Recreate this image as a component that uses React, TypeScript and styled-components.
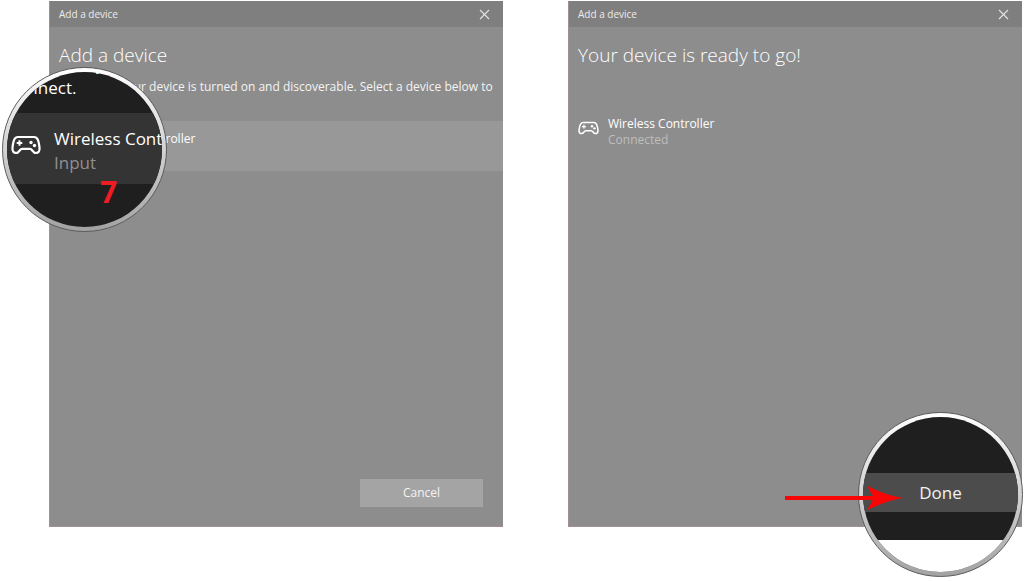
import React from "react";
import styled, { createGlobalStyle } from "styled-components";

const GlobalStyle = createGlobalStyle`
  *, *::before, *::after { box-sizing: border-box; }
  body {
    margin: 0;
    background: #ffffff;
    color: #ffffff;
    font-family: "Open Sans", "Noto Sans", sans-serif;
    font-size: 12px;
    line-height: 16px;
  }
  button { font: inherit; color: inherit; border: 0; padding: 0; }
  h1, p { margin: 0; }
`;

const Page = styled.main`
  display: grid;
  grid-template-columns: 1fr 1fr;
  gap: 65px;
  min-height: 100vh;
  padding: 1px 2px 54px 49px;
  overflow: hidden;
`;

const Dialog = styled.section`
  position: relative;
  display: flex;
  flex-direction: column;
  background: #8d8d8d;
  border: solid #a38f93;
  border-width: 0 0 1px 1px;
`;

const TitleBar = styled.header`
  display: flex;
  align-items: center;
  justify-content: space-between;
  height: 26px;
  padding: 0 13px 0 9px;
  background: #7f7f7f;
  color: #ececec;
  font-size: 10px;
`;

const CloseButton = styled.button`
  display: flex;
  background: transparent;
`;

const Heading = styled.h1`
  padding: 14px 9px 0;
  font-size: 19px;
  font-weight: 350;
  line-height: 28px;
`;

const Hint = styled.p`
  padding: 10px 8px 0 9px;
  color: #f4f4f4;
`;

const DeviceRow = styled.button<{ $selected?: boolean }>`
  display: flex;
  align-items: flex-start;
  gap: 9px;
  width: 100%;
  min-height: 50px;
  margin-top: ${(p) => (p.$selected ? 10 : 37)}px;
  padding: 10px 9px 8px;
  text-align: left;
  background: ${(p) => (p.$selected ? "#989898" : "transparent")};

  svg { margin-top: 5px; }
`;

const DeviceText = styled.span<{ $large?: boolean }>`
  display: flex;
  flex-direction: column;
  white-space: nowrap;
  font-size: ${(p) => (p.$large ? 17 : 12)}px;
  line-height: ${(p) => (p.$large ? 24 : 16)}px;
`;

const Status = styled.span<{ $tone: string }>`
  color: ${(p) => p.$tone};
`;

const Footer = styled.footer`
  display: flex;
  justify-content: flex-end;
  margin-top: auto;
  padding: 0 20px 19px;
`;

const CancelButton = styled.button`
  width: 123px;
  height: 28px;
  background: #a4a4a4;
  color: #f4f4f4;
`;

const Lens = styled.div<{ $place: "left" | "right" }>`
  position: absolute;
  z-index: 1;
  ${(p) => (p.$place === "left" ? "left: -48px; top: 66px;" : "right: -1px; bottom: -51px;")}
  width: 165px;
  height: 165px;
  padding: 4px;
  border: 1px solid #5c5c5c;
  border-radius: 50%;
  background: linear-gradient(#ffffff, #d2d2d2 50%, #a2a2a2);
`;

const LensGlass = styled.div`
  display: flex;
  flex-direction: column;
  height: 100%;
  overflow: hidden;
  border-radius: 50%;
  background: #1f1f1f;
`;

const LensHint = styled.div`
  display: flex;
  flex: none;
  flex-direction: column;
  justify-content: flex-end;
  height: 41px;
  padding: 0 0 13px 2px;
  white-space: nowrap;
  font-size: 17px;
  line-height: 24px;
`;

const LensRow = styled.div`
  display: flex;
  align-items: flex-start;
  gap: 13px;
  flex: none;
  height: 71px;
  padding: 14px 0 0 4px;
  background: #343434;

  svg { flex: none; margin-top: 8px; }
`;

const StepNumber = styled.strong`
  position: absolute;
  left: 97px;
  top: 109px;
  color: #ee1c23;
  font-size: 30px;
  line-height: 30px;
`;

const LensSpace = styled.div<{ $tall?: boolean }>`
  flex: none;
  height: ${(p) => (p.$tall ? 56 : 28)}px;
`;

const DoneButton = styled.button`
  flex: none;
  height: 39px;
  background: #4c4c4c;
  color: #f2f2f2;
  font-size: 17px;
`;

const LensBelow = styled.div`
  flex: 1;
  background: #ffffff;
`;

const Arrow = styled.svg`
  position: absolute;
  z-index: 2;
  right: 119px;
  bottom: 15px;
`;

function Gamepad({ width, height }: { width: number; height: number }) {
  return (
    <svg width={width} height={height} viewBox="0 0 30 20" fill="none" aria-hidden="true">
      <path
        d="M7 2H23C26.500 2 27.600 5 28.500 12.500C29 16.500 27 18 25 18C21.600 18 21.500 13.800 18.800 13.800H11.200C8.500 13.800 8.400 18 5 18C3 18 1 16.500 1.500 12.500C2.400 5 3.500 2 7 2Z"
        stroke="#fff"
        strokeWidth="2.200"
      />
      <path d="M8.500 5.200V10.800M5.700 8H11.300" stroke="#fff" strokeWidth="2" />
      <circle cx="20" cy="7.500" r="1.700" fill="#fff" />
      <circle cx="23.500" cy="10.500" r="1.700" fill="#fff" />
    </svg>
  );
}

function DialogTitle() {
  return (
    <TitleBar>
      <span>Add a device</span>
      <CloseButton type="button" aria-label="Close">
        <svg width="11" height="11" viewBox="0 0 11 11" aria-hidden="true">
          <path d="M1 1L10 10M10 1L1 10" stroke="#e4e4e4" strokeWidth="1.100" />
        </svg>
      </CloseButton>
    </TitleBar>
  );
}

export default function App() {
  return (
    <>
      <GlobalStyle />
      <Page>
        <Dialog>
          <DialogTitle />
          <Heading>Add a device</Heading>
          <Hint>
            Make sure your device is turned on and discoverable. Select a device below to connect.
          </Hint>
          <DeviceRow type="button" $selected>
            <Gamepad width={21} height={14} />
            <DeviceText>
              <span>Wireless Controller</span>
              <Status $tone="#c4c4c4">Input</Status>
            </DeviceText>
          </DeviceRow>
          <Footer>
            <CancelButton type="button">Cancel</CancelButton>
          </Footer>
          <Lens $place="left" aria-hidden="true">
            <LensGlass>
              <LensHint>
                <span>Make sure your</span>
                <span>connect.</span>
              </LensHint>
              <LensRow>
                <Gamepad width={30} height={20} />
                <DeviceText $large>
                  <span>Wireless Controller</span>
                  <Status $tone="#8f8f8f">Input</Status>
                </DeviceText>
              </LensRow>
            </LensGlass>
            <StepNumber>7</StepNumber>
          </Lens>
        </Dialog>

        <Dialog>
          <DialogTitle />
          <Heading>Your device is ready to go!</Heading>
          <DeviceRow type="button">
            <Gamepad width={21} height={14} />
            <DeviceText>
              <span>Wireless Controller</span>
              <Status $tone="#bdbdbd">Connected</Status>
            </DeviceText>
          </DeviceRow>
          <Lens $place="right">
            <LensGlass>
              <LensSpace $tall />
              <DoneButton type="button">Done</DoneButton>
              <LensSpace />
              <LensBelow />
            </LensGlass>
          </Lens>
          <Arrow width="118" height="26" viewBox="0 0 118 26" aria-hidden="true">
            <path d="M0 11H88L82 1C93 6 105 11 118 13C105 15 93 20 82 25L88 15H0Z" fill="#f90505" />
          </Arrow>
        </Dialog>
      </Page>
    </>
  );
}
